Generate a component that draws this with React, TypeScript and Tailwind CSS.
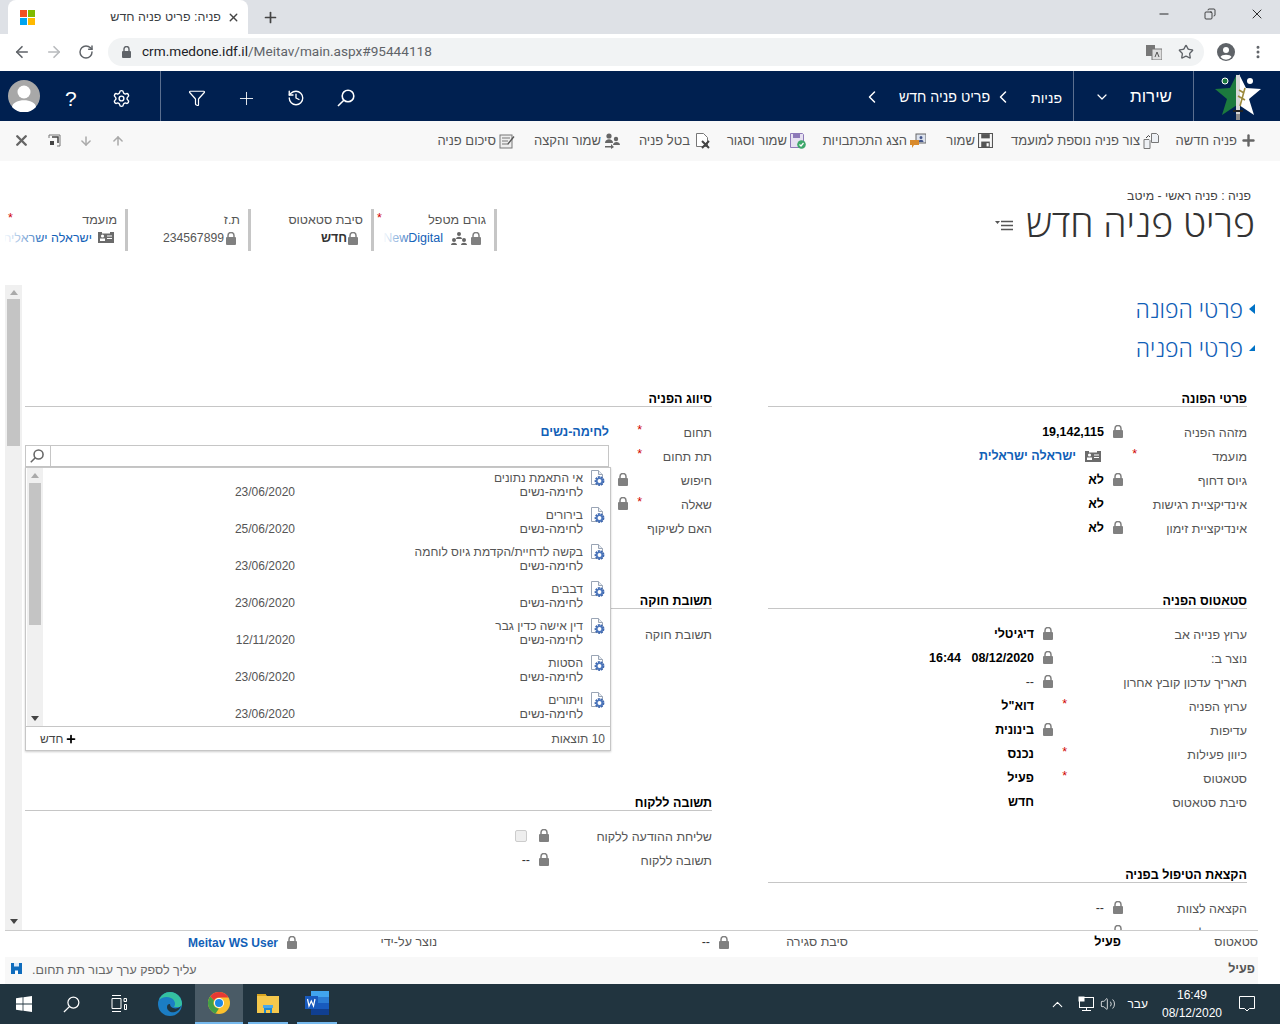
import React, { ReactNode } from 'react'
import {
  ArrowDown,
  ArrowLeft,
  ArrowRight,
  ArrowUp,
  ChevronDown,
  ChevronRight,
  ChevronUp,
  Copy,
  EllipsisVertical,
  Filter,
  History,
  Minus,
  Plus,
  RotateCw,
  Settings,
  Star,
  Volume2,
  X,
} from 'lucide-react'

const LockIcon = () => (
  <svg width="10" height="13" viewBox="0 0 10 13" className="shrink-0">
    <path d="M2 6V3.5a3 3 0 0 1 6 0V6" fill="none" stroke="#808080" strokeWidth="1.5" />
    <rect x="0" y="5" width="10" height="8" rx="1" fill="#808080" />
  </svg>
)

const CardIcon = () => (
  <svg width="16" height="12" viewBox="0 0 16 12" className="shrink-0">
    <rect x="0" y="0" width="16" height="11" fill="#6b6b6b" />
    <rect x="4" y="0" width="8" height="1.5" fill="#fff" />
    <circle cx="4.5" cy="4" r="1.6" fill="#fff" />
    <rect x="2" y="6.5" width="5" height="2.5" fill="#fff" />
    <rect x="9" y="3.5" width="5" height="1" fill="#fff" />
    <rect x="9" y="6" width="5" height="1" fill="#fff" />
  </svg>
)

const DocGearIcon = () => (
  <svg width="16" height="17" viewBox="0 0 16 17" className="shrink-0">
    <path d="M1.5 .5h7l4 4v10h-11z" fill="#fff" stroke="#9aa5b5" />
    <path d="M8.500 .5v4h4" fill="#e6ebf2" stroke="#9aa5b5" />
    <circle cx="9.5" cy="11" r="3.6" fill="none" stroke="#3f68b0" strokeWidth="2.6" strokeDasharray="1.8 .7" />
    <circle cx="9.5" cy="11" r="2.8" fill="none" stroke="#4b76bd" strokeWidth="1.6" />
  </svg>
)

// handle runs to the bottom left, same glass in the nav, lookup and taskbar
const SearchGlass = ({ size = 18, color = '#fff', width = 1.6 }: { size?: number; color?: string; width?: number }) => (
  <svg width={size} height={size} viewBox="0 0 18 18" className="shrink-0" fill="none" stroke={color} strokeWidth={width}>
    <circle cx="11" cy="7" r="5.800" />
    <path d="M6.800 11.200 1 17" />
  </svg>
)

const Tri = ({ up, color }: { up?: boolean; color: string }) => (
  <svg width="8" height="5" viewBox="0 0 8 5" className="shrink-0">
    <path d={up ? 'M4 0l4 5H0z' : 'M4 5 0 0h8z'} fill={color} />
  </svg>
)

const Logo = () => (
  <svg width="48" height="48" viewBox="0 0 48 48">
    <polygon points="23,2 23,33 8,43 13,27 1,17 16,16" fill="#1c7a3e" />
    <polygon points="25,2 25,33 40,43 35,27 47,17 32,16" fill="#ffffff" />
    <circle cx="11" cy="9" r="3" fill="#1c7a3e" stroke="#fff" strokeWidth="1" />
    <circle cx="36" cy="9" r="3" fill="#fff" />
    <rect x="22" y="3" width="4" height="42" fill="#d8d8d8" />
    <rect x="19" y="38" width="10" height="2" fill="#222" />
    <path d="M31 16 L26 34 M24 24 l7 4 M25 18 l5 3" stroke="#9c8a3c" strokeWidth="1.6" fill="none" />
    <rect x="22" y="42" width="4" height="6" fill="#8a8a8a" />
  </svg>
)

const WinLogo = () => (
  <svg width="16" height="16" viewBox="0 0 16 16">
    <path d="M0 2.3 6.6 1.3V7.6H0zM7.4 1.2 16 0V7.6H7.4zM0 8.4H6.6V14.7L0 13.7zM7.4 8.4H16V16L7.4 14.8z" fill="#fff" />
  </svg>
)

const EdgeLogo = () => (
  <svg width="24" height="24" viewBox="0 0 24 24">
    <circle cx="12" cy="12" r="12" fill="#1b7dc4" />
    <path d="M24 12c0-6-5-12-12-12C7 0 3 3 1 8c3-3 8-4 12-2 4 2 5 6 3 9h6c1-1 2-2 2-3z" fill="#35c1a0" />
    <path d="M9 15c0 4 4 6 8 5 3-1 5-3 6-6-2 2-5 3-8 2-2-1-3-2-3-4-2 0-3 1-3 3z" fill="#1f3541" />
  </svg>
)

const ChromeLogo = () => (
  <svg width="22" height="22" viewBox="0 0 22 22">
    <circle cx="11" cy="11" r="11" fill="#fbc02d" />
    <path d="M11 0a11 11 0 0 1 9.5 5.5H11a5.5 5.5 0 0 0-5 3L2.2 4.4A11 11 0 0 1 11 0z" fill="#e53935" />
    <path d="M2.2 4.4 6 8.5a5.5 5.5 0 0 0 5 8l-3.4 5A11 11 0 0 1 2.2 4.4z" fill="#43a047" />
    <circle cx="11" cy="11" r="5" fill="#fff" />
    <circle cx="11" cy="11" r="4" fill="#1e88e5" />
  </svg>
)

const FolderLogo = () => (
  <svg width="22" height="20" viewBox="0 0 22 20">
    <path d="M0 1h8l2 2h12v17H0z" fill="#f5c84c" />
    <rect x="0" y="1" width="9" height="2" fill="#d9a520" />
    <path d="M7 15h8v5h-2v-3H9v3H7z" fill="#1e88d2" />
    <rect x="6" y="12" width="10" height="3" fill="#4aa8e8" />
  </svg>
)

const WordLogo = () => (
  <svg width="24" height="24" viewBox="0 0 24 24">
    <rect x="6" y="0" width="18" height="6" fill="#41a5ee" />
    <rect x="6" y="6" width="18" height="6" fill="#2b7cd3" />
    <rect x="6" y="12" width="18" height="6" fill="#185abd" />
    <rect x="6" y="18" width="18" height="6" fill="#103f91" />
    <rect x="0" y="5" width="13" height="13" fill="#185abd" />
    <path d="M2.5 8l1.5 7 2.3-5 2.2 5 1.5-7" fill="none" stroke="#fff" strokeWidth="1.2" />
  </svg>
)

const CommandGlyph = ({ kind }: { kind: string }) => {
  if (kind === 'plus') return <Plus size={17} strokeWidth={3.4} className="text-[#666]" />
  if (kind === 'save')
    return (
      <svg width="15" height="15" viewBox="0 0 14 14">
        <path d="M.5.5h13v13H.5z" fill="none" stroke="#555" />
        <rect x="3" y="1" width="8" height="4" fill="#555" />
        <rect x="3" y="8" width="8" height="5.5" fill="#555" />
        <rect x="8" y="9.5" width="2" height="3" fill="#fff" />
      </svg>
    )
  if (kind === 'copy')
    return (
      <svg width="16" height="16" viewBox="0 0 16 16">
        <path d="M8.5.5h5l2 2v7h-7z" fill="#eef1f5" stroke="#777" />
        <path d="M1 6.5h5l1 1v8H1z" fill="#eef1f5" stroke="#777" />
        <path d="M3 5 5.5 2.5 7 4" fill="none" stroke="#444" />
      </svg>
    )
  if (kind === 'mail')
    return (
      <svg width="16" height="16" viewBox="0 0 16 16">
        <rect x="6" y="1" width="10" height="9" fill="#dde3ee" stroke="#666" />
        <path d="M11 3a1.3 1.3 0 1 1 0 3 1.3 1.3 0 0 1 0-3zM8.5 9c0-3 5-3 5 0z" fill="#44558a" />
        <path d="M0 7h9v5H4l-2 3v-3H0z" fill="#d98a2b" />
      </svg>
    )
  if (kind === 'saveclose')
    return (
      <svg width="16" height="16" viewBox="0 0 16 16">
        <path d="M.5.5h12l1 1v13H.5z" fill="#e6e1f1" stroke="#8d79b8" />
        <rect x="3" y="1" width="7" height="4" fill="#8d79b8" />
        <circle cx="11.5" cy="11.5" r="4.3" fill="#3ea86b" />
        <path d="M9.5 11.5l1.5 1.5 2.5-3" fill="none" stroke="#fff" strokeWidth="1.2" />
      </svg>
    )
  if (kind === 'cancel')
    return (
      <svg width="17" height="16" viewBox="-3 0 17 16">
        <path d="M.5.5h7l4 4v9H.5z" fill="#fff" stroke="#777" />
        <path d="M6 8l7 7M13 8l-7 7" stroke="#444" strokeWidth="2" />
      </svg>
    )
  if (kind === 'assign')
    return (
      <svg width="16" height="16" viewBox="0 0 16 16" fill="#666">
        <circle cx="5" cy="3" r="2.6" />
        <path d="M1 10c0-5 8-5 8 0z" />
        <circle cx="12" cy="6" r="2.2" />
        <path d="M9 12c0-4 7-4 7 0z" />
        <path d="M1 13h6v-2l3 3-3 2v-1.500H1z" />
      </svg>
    )
  return (
    <svg width="16" height="16" viewBox="0 0 16 16">
      <rect x="1" y="2" width="12" height="13" fill="#eee" stroke="#777" />
      <path d="M3 5h8M3 8h6M3 11h5" stroke="#777" />
      <path d="M8 11 14.500 3l1 1L9 12z" fill="#555" />
    </svg>
  )
}

const commands = [
  { label: 'פניה חדשה', icon: 'plus', width: 'w-[98px]' },
  { label: 'צור פניה נוספת למועמד', icon: 'copy', width: 'w-[166px]' },
  { label: 'שמור', icon: 'save', width: 'w-[67px]' },
  { label: 'הצג התכתבויות', icon: 'mail', width: 'w-[120px]' },
  { label: 'שמור וסגור', icon: 'saveclose', width: 'w-[96px]' },
  { label: 'בטל פניה', icon: 'cancel', width: 'w-[90px]' },
  { label: 'שמור והקצה', icon: 'assign', width: 'w-[105px]' },
  { label: 'סיכום פניה', icon: 'notes', width: 'w-[90px]' },
]

const results = [
  { title: 'אי התאמת נתונים', date: '23/06/2020' },
  { title: 'בירורים', date: '25/06/2020' },
  { title: 'בקשה לדחיית/הקדמת גיוס לוחמה', date: '23/06/2020' },
  { title: 'דבבים', date: '23/06/2020' },
  { title: 'דין אישה כדין גבר', date: '12/11/2020' },
  { title: 'הסטות', date: '23/06/2020' },
  { title: 'ויתורים', date: '23/06/2020' },
]

interface RowProps {
  label: string
  labelWidth: string
  star?: boolean
  lock?: boolean
  children?: ReactNode
}

const Row = ({ label, labelWidth, star, lock, children }: RowProps) => (
  <div className="flex items-center h-6 text-[12.5px]">
    <span className={`${labelWidth} shrink-0 text-[#555] pt-px whitespace-nowrap`}>{label}</span>
    <span className="w-[10px] shrink-0 text-[#d00000] leading-none self-start pt-[3px]">{star ? '*' : ''}</span>
    <span className="w-[19px] shrink-0 flex justify-center pb-1">{lock && <LockIcon />}</span>
    <div className="mr-1 pb-px flex items-center font-bold text-black">{children}</div>
  </div>
)

const SectionHead = ({ title, className = '' }: { title: string; className?: string }) => (
  <div className={`h-[15px] border-b border-[#c6c6c6] text-[12.5px] font-bold text-black leading-[15px] ${className}`}>
    {title}
  </div>
)

const HeaderField = ({ label, star, children }: { label: string; star?: boolean; children: ReactNode }) => (
  <div className="w-[123px] h-[42px] border-r-[3px] border-[#c6c6c6] pr-2 relative text-[12.5px] pt-[3px]">
    <div className="text-[#555] leading-4">{label}</div>
    {star && <span className="absolute left-[3px] top-0 text-[#d00000]">*</span>}
    <div className="flex items-center gap-1 mt-[2px] whitespace-nowrap overflow-hidden h-4">{children}</div>
  </div>
)

export default function App() {
  const rightL = 'w-[110px]'
  const statusL = 'w-[180px]'
  return (
    <div className="w-[1280px] h-[1024px] overflow-hidden flex flex-col bg-white font-['Liberation_Sans',sans-serif]">
      {/* chrome tabs */}
      <div className="h-[34px] bg-[#dee1e6] flex items-end shrink-0">
        <div className="ml-2 w-[240px] h-[34px] bg-white rounded-t-lg flex items-center pl-3 pr-2">
          <svg width="15" height="15" viewBox="0 0 15 15" className="shrink-0">
            <rect width="7" height="7" fill="#f25022" />
            <rect x="8" width="7" height="7" fill="#7fba00" />
            <rect y="8" width="7" height="7" fill="#00a4ef" />
            <rect x="8" y="8" width="7" height="7" fill="#ffb900" />
          </svg>
          <span dir="rtl" className="ml-[76px] w-[110px] text-[12.5px] text-[#3c4043] whitespace-nowrap">פניה: פריט פניה חדש</span>
          <X size={13} strokeWidth={2.5} className="ml-auto text-[#444]" />
        </div>
        <Plus size={17} strokeWidth={2.4} className="ml-[14px] mb-2 text-[#444]" />
        <div className="ml-auto flex items-center self-start h-[28px] text-[#111]">
          <Minus size={14} strokeWidth={1.5} className="mr-[33px]" />
          <Copy size={12} strokeWidth={1.5} className="mr-[33px] -scale-x-100" />
          <X size={16} strokeWidth={1.3} className="mr-[15px]" />
        </div>
      </div>
      {/* chrome address bar */}
      <div className="h-[37px] pb-px flex items-center shrink-0 text-[#5f6368]">
        <ArrowLeft size={18} strokeWidth={2.2} className="ml-[13px]" />
        <ArrowRight size={18} strokeWidth={2.2} className="ml-[14px] text-[#b8babd]" />
        <RotateCw size={16} strokeWidth={2.2} className="ml-[15px]" />
        <div className="ml-[14px] w-[1096px] h-7 rounded-full bg-[#f1f3f4] flex items-center pl-[14px] pr-[10px]">
          <svg width="9" height="12" viewBox="0 0 9 12" className="shrink-0">
            <path d="M2 5V3a2.500 2.500 0 0 1 5 0v2" fill="none" stroke="#5f6368" strokeWidth="1.400" />
            <rect y="5" width="9" height="7" rx="1" fill="#5f6368" />
          </svg>
          <span className="ml-[11px] text-[13.6px] leading-none font-['Roboto',sans-serif]">
            <span className="text-[#202124]">crm.medone.idf.il</span>/Meitav/main.aspx#95444118
          </span>
          <svg width="16" height="15" viewBox="0 0 16 15" className="ml-auto mr-4">
            <rect x="0" y="0" width="9" height="11" fill="#777" />
            <rect x="6" y="4" width="10" height="11" fill="#ddd" stroke="#777" />
            <path d="M9 12l2-5 2 5" fill="none" stroke="#555" />
          </svg>
          <Star size={16} strokeWidth={2} />
        </div>
        <svg width="18" height="18" viewBox="0 0 18 18" className="ml-[13px]">
          <circle cx="9" cy="9" r="9" fill="#5f6368" />
          <circle cx="9" cy="7" r="3" fill="#fff" />
          <path d="M3.500 14c1-3 10-3 11 0a7 7 0 0 1-11 0z" fill="#fff" />
        </svg>
        <EllipsisVertical size={16} strokeWidth={2.5} className="ml-[15px]" />
      </div>
      {/* crm nav */}
      <div className="h-[50px] bg-[#002050] flex items-center shrink-0 text-white">
        <div className="w-[161px] h-full border-r border-[#5b6f8f] flex items-center pl-2">
          <svg width="32" height="32" viewBox="0 0 32 32">
            <circle cx="16" cy="16" r="16" fill="#a8a8a8" />
            <circle cx="16" cy="12" r="6.500" fill="#fff" />
            <path d="M4 27c1-9 23-9 24 0a16 16 0 0 1-24 0z" fill="#fff" />
          </svg>
          <span className="ml-[25px] mt-1 text-[21px] leading-none">?</span>
          <Settings size={19} strokeWidth={1.8} className="ml-[35px] mt-1" />
        </div>
        <Filter size={18} strokeWidth={1.6} className="ml-[27px] mt-1" />
        <Plus size={21} strokeWidth={1} className="ml-[30px] mt-1" />
        <History size={18} strokeWidth={1.8} className="ml-[30px] mt-1" />
        <span className="ml-[32px] mt-1"><SearchGlass /></span>
        <div dir="rtl" className="ml-auto flex items-center h-full">
          <div className="w-[87px] h-full flex items-center justify-center border-l border-[#5b6f8f] pl-[2px]">
            <Logo />
          </div>
          <div className="w-[120px] h-full flex items-center border-l border-[#5b6f8f] pr-[21px]">
            <span className="text-[17px] mt-0.5">שירות</span>
            <ChevronDown size={16} strokeWidth={1.8} className="mr-[20px] mt-0.5" />
          </div>
          <span className="mr-[11px] text-[14px] mt-1">פניות</span>
          <ChevronRight size={20} strokeWidth={1.8} className="mr-[18px] rotate-180 mt-0.5" />
          <span className="mr-[3px] text-[14.2px] mt-1">פריט פניה חדש</span>
          <ChevronRight size={20} strokeWidth={1.8} className="mr-[17px] rotate-180 mt-0.5" />
        </div>
      </div>
      {/* command bar */}
      <div className="h-10 pb-px bg-[#f8f8f8] flex items-center shrink-0 text-[13px] text-[#555]">
        <X size={17} strokeWidth={3.4} className="ml-[13px] text-[#666]" />
        <svg width="13" height="13" viewBox="0 0 13 13" className="ml-[18px]">
          <path d="M1 1h11v11" fill="none" stroke="#777" />
          <path d="M1 1v3M9 12h3" stroke="#777" />
          <rect x="2" y="7" width="4" height="4" fill="#444" />
          <path d="M4 3h6v6" fill="none" stroke="#444" strokeWidth="1.500" />
        </svg>
        <ArrowDown size={14} strokeWidth={2.6} className="ml-[18px] text-[#aaa]" />
        <ArrowUp size={14} strokeWidth={2.6} className="ml-[18px] text-[#aaa]" />
        <div dir="rtl" className="ml-auto flex items-center pr-[23px]">
          {commands.map((c) => (
            <div key={c.label} className={`${c.width} flex items-center gap-[3px] whitespace-nowrap`}>
              <CommandGlyph kind={c.icon} />
              <span>{c.label}</span>
            </div>
          ))}
        </div>
      </div>
      {/* title strip */}
      <div dir="rtl" className="h-[124px] flex justify-between shrink-0 pr-[25px]">
        <div className="pt-[28px]">
          <div className="text-[12.3px] text-[#444] leading-[15px] pr-[4px]">פניה : פניה ראשי - מיטב</div>
          <div className="flex items-center">
            <span className="text-[37.5px] leading-[38px] font-light text-[#333] font-['Open_Sans','Liberation_Sans',sans-serif]">פריט פניה חדש</span>
            <svg width="18" height="11" viewBox="0 0 18 11" className="mr-[13px] mt-1">
              <path d="M6 1.500h12M6 5.500h12M6 9.500h12" stroke="#555" strokeWidth="1.600" />
              <path d="M0 1h5L2.500 4z" fill="#555" />
            </svg>
          </div>
        </div>
        <div className="flex pt-[48px] pl-[5px] h-fit">
          <HeaderField label="גורם מטפל" star>
            <span className="mr-[5px]"><LockIcon /></span>
            <span className="w-4 h-3 flex"><svg width="16" height="13" viewBox="0 0 16 13" fill="#666"><circle cx="8" cy="2" r="2" /><path d="M5 7c0-3 6-3 6 0z" /><circle cx="3" cy="8" r="2" /><path d="M0 13c0-3 6-3 6 0z" /><circle cx="13" cy="8" r="2" /><path d="M10 13c0-3 6-3 6 0z" /></svg></span>
            <span dir="ltr" className="text-[#1160b7] mr-[4px] relative">NewDigital<span className="absolute inset-y-0 left-0 w-[30px] bg-gradient-to-r from-white to-white/0" /></span>
          </HeaderField>
          <HeaderField label="סיבת סטאטוס">
            <span className="mr-[5px]"><LockIcon /></span>
            <span className="font-bold text-[#333] -mr-[3px]">חדש</span>
          </HeaderField>
          <HeaderField label="ת.ז">
            <span className="mr-1"><LockIcon /></span>
            <span className="text-[#555] text-[12.2px] -mr-[2px]">234567899</span>
          </HeaderField>
          <HeaderField label="מועמד" star>
            <span className="mr-[3px]"><CardIcon /></span>
            <span className="text-[#1160b7] mr-[2px] relative">ישראלה ישראלית<span className="absolute inset-y-0 left-0 w-[44px] bg-gradient-to-r from-white to-white/0" /></span>
          </HeaderField>
        </div>
      </div>
      {/* form */}
      <div dir="rtl" className="h-[645px] flex ml-[5px] mr-[22px] shrink-0 overflow-hidden">
        <div className="flex-1 min-w-0 pr-[3px] overflow-hidden">
          <div className="pt-2 text-[23px] leading-8 font-light text-[#1160b7] flex items-center font-['Open_Sans','Liberation_Sans',sans-serif]">
            <svg width="6" height="10" viewBox="0 0 6 10" className="ml-[6px]"><path d="M6 0v10L0 5z" fill="#0072c6" /></svg>
            <span>פרטי הפונה</span>
          </div>
          <div className="mt-[7px] text-[23px] leading-8 font-light text-[#1160b7] flex items-center font-['Open_Sans','Liberation_Sans',sans-serif]">
            <svg width="6" height="6" viewBox="0 0 6 6" className="ml-[6px]"><path d="M6 6H0V0z" fill="#0072c6" transform="matrix(-1 0 0 1 6 0)" /></svg>
            <span>פרטי הפניה</span>
          </div>
          <div className="flex mt-[28px] pr-2 gap-[56px]">
            {/* right column */}
            <div className="w-[479px] shrink-0">
              <SectionHead title="פרטי הפונה" />
              <div className="mt-[14px]">
                <Row label="מזהה הפניה" labelWidth={rightL} lock>19,142,115</Row>
                <Row label="מועמד" labelWidth={rightL} star>
                  <span className="mr-[3px]"><CardIcon /></span>
                  <span className="text-[#1160b7] mr-[9px]">ישראלה ישראלית</span>
                </Row>
                <Row label="גיוס דחוף" labelWidth={rightL} lock>לא</Row>
                <Row label="אינדיקציית רגישות" labelWidth={rightL} >לא</Row>
                <Row label="אינדיקציית זימון" labelWidth={rightL} lock>לא</Row>
              </div>
              <SectionHead title="סטאטוס הפניה" className="mt-[53px]" />
              <div className="mt-[14px]">
                <Row label="ערוץ פנייה אב" labelWidth={statusL} lock>דיגיטלי</Row>
                <Row label="נוצר ב:" labelWidth={statusL} lock>
                  <span dir="ltr" className="whitespace-pre">16:44   08/12/2020</span>
                </Row>
                <Row label="תאריך עדכון קובץ אחרון" labelWidth={statusL} lock>
                  <span className="font-normal text-[#333]">--</span>
                </Row>
                <Row label="ערוץ הפניה" labelWidth={statusL} star>דוא"ל</Row>
                <Row label="עדיפות" labelWidth={statusL} lock>בינונית</Row>
                <Row label="כיוון פעילות" labelWidth={statusL} star>נכנס</Row>
                <Row label="סטאטוס" labelWidth={statusL} star>פעיל</Row>
                <Row label="סיבת סטאטוס" labelWidth={statusL}>חדש</Row>
              </div>
              <SectionHead title="הקצאת הטיפול בפניה" className="mt-[53px]" />
              <div className="mt-[14px]">
                <Row label="הקצאה לצוות" labelWidth={rightL} lock>
                  <span className="font-normal text-[#333]">--</span>
                </Row>
                <Row label="הקצאה ל" labelWidth={rightL} lock />
              </div>
            </div>
            {/* left column */}
            <div className="w-[687px] shrink-0 relative">
              <SectionHead title="סיווג הפניה" />
              <div className="mt-[14px]">
                <Row label="תחום" labelWidth="w-[70px]" star>
                  <span className="text-[#1160b7]">לחימה-נשים</span>
                </Row>
                <div className="flex items-center h-6 text-[12.5px]">
                  <span className="w-[70px] shrink-0 text-[#555] pt-px">תת תחום</span>
                  <span className="w-[10px] shrink-0 text-[#d00000] leading-none self-start pt-[3px]">*</span>
                  <div className="flex flex-1 mr-[23px] h-[22px] mb-0.5">
                    <div className="flex-1 border border-[#c6c6c6] bg-white" />
                    <div className="w-[25px] border border-[#c6c6c6] border-r-0 flex items-center justify-center pr-[2px]">
                      <SearchGlass size={14} color="#666" width={2} />
                    </div>
                  </div>
                </div>
                <Row label="חיפוש" labelWidth="w-[70px]" lock />
                <Row label="שאלה" labelWidth="w-[70px]" star lock />
                <Row label="האם לשיקוף" labelWidth="w-[70px]" />
              </div>
              <SectionHead title="תשובת חוקה" className="mt-[53px]" />
              <div className="mt-[14px]">
                <Row label="תשובת חוקה" labelWidth="w-[149px]" />
              </div>
              <SectionHead title="תשובה ללקוח" className="mt-[149px]" />
              <div className="mt-[14px]">
                <Row label="שליחת ההודעה ללקוח" labelWidth="w-[149px]" lock>
                  <span className="mr-[3px] w-[12px] h-[12px] rounded-[2px] border border-[#ccc] bg-[#eee] mb-px" />
                </Row>
                <Row label="תשובה ללקוח" labelWidth="w-[149px]" lock>
                  <span className="font-normal text-[#333]">--</span>
                </Row>
              </div>
              {/* lookup results */}
              <div className="absolute left-0 top-[75px] w-[586px] h-[284px] border border-[#c6c6c6] bg-white flex flex-col shadow-[0_1px_2px_rgba(0,0,0,0.2)] text-[12px] text-[#555]">
                <div className="flex-1 flex min-h-0">
                  <div className="flex-1 pr-[4px] pt-[3px]">
                    {results.map((r) => (
                      <div key={r.title} className="h-[37px] flex">
                        <span className="-mt-px"><DocGearIcon /></span>
                        <div className="mr-[7px] flex-1 leading-[14px]">
                          <div className="whitespace-nowrap">{r.title}</div>
                          <div className="flex">
                            <span className="w-[288px] shrink-0 text-[12.5px]">לחימה-נשים</span>
                            <span dir="ltr">{r.date}</span>
                          </div>
                        </div>
                      </div>
                    ))}
                  </div>
                  <div className="w-4 ml-px bg-[#f0f0f0] flex flex-col items-center">
                    <span className="mt-[5px]"><Tri up color="#aaa" /></span>
                    <div className="w-3 h-[142px] bg-[#c4c4c4] mt-[5px]" />
                    <span className="mt-auto mb-[5px]"><Tri color="#444" /></span>
                  </div>
                </div>
                <div className="h-6 border-t border-[#c6c6c6] flex items-center justify-between pr-[5px] pl-[14px]">
                  <span>10 תוצאות</span>
                  <span className="flex items-center gap-[2px] text-[#444]">
                    <Plus size={12} strokeWidth={3.5} className="text-black" />חדש
                  </span>
                </div>
              </div>
            </div>
          </div>
        </div>
        <div className="w-[17px] shrink-0 bg-[#f0f0f0] flex flex-col items-center">
          <span className="mt-[5px]"><Tri up color="#aaa" /></span>
          <div className="w-[13px] h-[147px] bg-[#c4c4c4] mt-[4px]" />
          <span className="mt-auto mb-[6px]"><Tri color="#444" /></span>
        </div>
      </div>
      {/* form footer */}
      <div dir="rtl" className="h-[27px] ml-[5px] w-[1253px] border-t border-[#ccc] flex items-center pb-[3px] text-[12.5px] shrink-0 bg-white relative">
        <span className="w-[137px] text-[#555]">סטאטוס</span>
        <span className="w-[273px] font-bold text-black">פעיל</span>
        <span className="w-[115px] text-[#555]">סיבת סגירה</span>
        <span className="w-[19px] flex justify-center"><LockIcon /></span>
        <span className="w-[273px] mr-1 text-[#333]">--</span>
        <span className="w-[136px] text-[#555]">נוצר על-ידי</span>
        <span className="w-[19px] flex justify-center"><LockIcon /></span>
        <span dir="ltr" className="mr-1 font-bold text-[12px] text-[#1160b7]">Meitav WS User</span>
      </div>
      {/* status bar */}
      <div dir="rtl" className="h-[27px] ml-[5px] w-[1253px] bg-[#f8f8f8] flex items-center justify-between text-[12.5px] shrink-0 pr-[3px] pl-[6px]">
        <span className="font-bold text-[#555] pb-[3px]">פעיל</span>
        <div className="flex items-center gap-[10px]">
          <span className="text-[#666]">עליך לספק ערך עבור תת תחום.</span>
          <svg width="11" height="11" viewBox="0 0 11 11" className="mb-1">
            <rect width="11" height="11" fill="#0f6cbd" />
            <rect x="3" y="0" width="5" height="3.500" fill="#dbeafa" />
            <rect x="4" y="7.500" width="3" height="3.500" fill="#fff" />
          </svg>
        </div>
      </div>
      {/* windows taskbar */}
      <div className="h-10 bg-[#21343f] flex items-center shrink-0 text-white">
        <span className="ml-4"><WinLogo /></span>
        <span className="ml-[31px]"><SearchGlass size={17} width={1.300} /></span>
        <svg width="16" height="18" viewBox="0 0 16 18" className="ml-[31px]" fill="none" stroke="#fff">
          <path d="M1 .5h9M1 16.500h9M1 3.500h9v10H1zM13 3.500h2.500v3H13zM13.500 9.500h2v5h-2z" />
        </svg>
        <span className="ml-[31px]"><EdgeLogo /></span>
        <div className="ml-[13px] w-12 h-full bg-[#4a5b66] border-b-[2px] border-[#76b9ed] flex items-center justify-center"><ChromeLogo /></div>
        <div className="ml-[5px] w-10 h-full border-b-[2px] border-[#76b9ed] flex items-center justify-center"><FolderLogo /></div>
        <div className="ml-[9px] w-10 h-full border-b-[2px] border-[#76b9ed] flex items-center justify-center"><WordLogo /></div>
        <ChevronUp size={17} strokeWidth={1.5} className="ml-auto" />
        <svg width="16" height="16" viewBox="0 0 16 16" className="ml-[12px]" fill="none" stroke="#fff"><rect x="1.500" y="1.500" width="14" height="10" /><rect x="1" y="1" width="5" height="4" fill="#fff" /><path d="M8.500 11.500v3M4 14.500h9" /></svg>
        <Volume2 size={16} strokeWidth={1.2} className="ml-[6px]" />
        <span dir="rtl" className="ml-[10px] text-[12px] w-[22px]">עבר</span>
        <div className="ml-[15px] w-[58px] flex flex-col items-center text-[12px] leading-[18px]">
          <span>16:49</span>
          <span>08/12/2020</span>
        </div>
        <svg width="16" height="16" viewBox="0 0 16 16" className="ml-[18px] mr-[25px]" fill="none" stroke="#fff"><path d="M.5.5h15v12h-5l-2.500 2.500-2.500-2.500h-5z" /></svg>
      </div>
    </div>
  )
}
